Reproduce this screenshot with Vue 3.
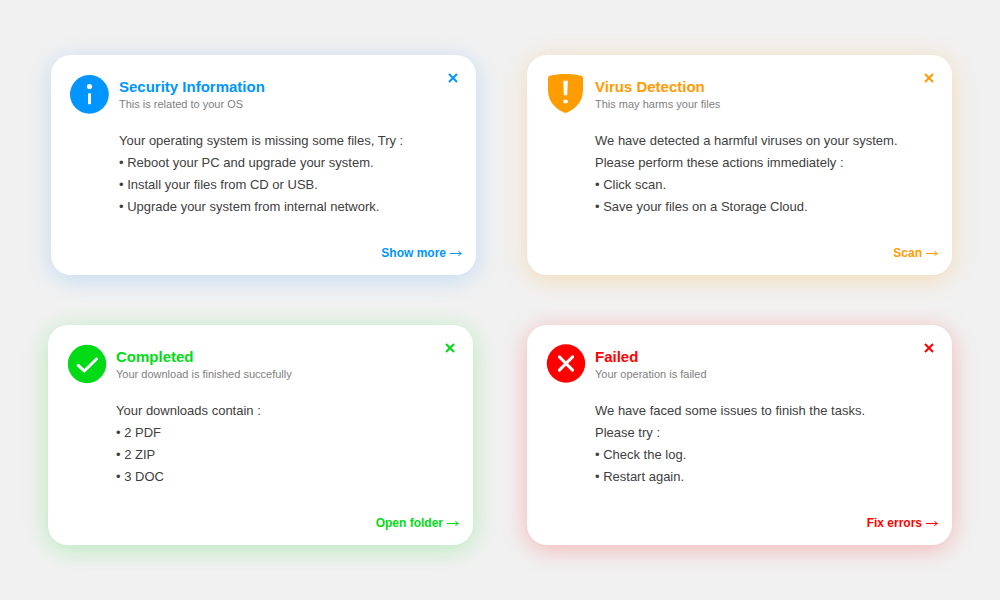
<script setup>
import { ref, computed } from 'vue'

const cards = ref([
  {
    id: 'info',
    title: 'Security Information',
    subtitle: 'This is related to your OS',
    lines: ['Your operating system is missing some files, Try :'],
    items: [
      'Reboot your PC and upgrade your system.',
      'Install your files from CD or USB.',
      'Upgrade your system from internal network.',
    ],
    action: 'Show more',
  },
  {
    id: 'warning',
    title: 'Virus Detection',
    subtitle: 'This may harms your files',
    lines: [
      'We have detected a harmful viruses on your system.',
      'Please perform these actions immediately :',
    ],
    items: ['Click scan.', 'Save your files on a Storage Cloud.'],
    action: 'Scan',
  },
  {
    id: 'success',
    title: 'Completed',
    subtitle: 'Your download is finished succefully',
    lines: ['Your downloads contain :'],
    items: ['2 PDF', '2 ZIP', '3 DOC'],
    action: 'Open folder',
  },
  {
    id: 'error',
    title: 'Failed',
    subtitle: 'Your operation is failed',
    lines: ['We have faced some issues to finish the tasks.', 'Please try :'],
    items: ['Check the log.', 'Restart again.'],
    action: 'Fix errors',
  },
])

const rows = computed(() => [
  { id: 'top', cards: cards.value.slice(0, 2) },
  { id: 'bottom', cards: cards.value.slice(2) },
])
</script>

<template>
  <main class="page">
    <div v-for="row in rows" :key="row.id" class="row" :class="row.id">
      <article v-for="card in row.cards" :key="card.id" class="card" :class="card.id">
        <header class="head">
          <svg class="icon" viewBox="0 0 40 40" aria-hidden="true">
            <template v-if="card.id === 'info'">
              <circle cx="19.4" cy="20.4" r="19.4" fill="currentColor" />
              <circle cx="19.5" cy="12.6" r="2.6" fill="#fff" />
              <rect x="18" y="19.4" width="3" height="10.8" fill="#fff" />
            </template>
            <template v-else-if="card.id === 'warning'">
              <path
                d="M3.800 1.800C13 -0.600 26.200 -0.600 35.400 1.800Q37 2.300 37 4V16C37 26.500 30.500 34.500 21.200 38.400Q19.500 39.200 17.800 38.400C8.500 34.500 2 26.500 2 16V4Q2 2.300 3.800 1.800Z"
                fill="currentColor"
              />
              <path d="M17.200 6.800H21.900L21.200 21.300H17.900Z" fill="#fff" />
              <ellipse cx="19.500" cy="27.500" rx="2.400" ry="1.900" fill="#fff" />
            </template>
            <template v-else-if="card.id === 'success'">
              <circle cx="20" cy="20" r="19.200" fill="currentColor" />
              <path d="M11.200 21.300L17.300 27L29.500 15" class="stroke" />
            </template>
            <template v-else>
              <circle cx="20" cy="19.500" r="19.200" fill="currentColor" />
              <path d="M13.400 12.900L26.600 26.100M26.600 12.900L13.400 26.100" class="stroke" />
            </template>
          </svg>
          <div class="titles">
            <h2>{{ card.title }}</h2>
            <p>{{ card.subtitle }}</p>
          </div>
          <button type="button" class="close" :aria-label="`Close ${card.title}`">
            <svg viewBox="0 0 10 10" aria-hidden="true">
              <path d="M1 1L9 9M9 1L1 9" />
            </svg>
          </button>
        </header>
        <div class="body">
          <p v-for="line in card.lines" :key="line">{{ line }}</p>
          <ul>
            <li v-for="item in card.items" :key="item">• {{ item }}</li>
          </ul>
        </div>
        <a href="#" class="action">
          {{ card.action }}
          <svg viewBox="0 0 12 7" aria-hidden="true">
            <path d="M0 3.500H11" />
            <path d="M8.500 1Q9.500 3 11.500 3.500Q9.500 4 8.500 6" />
          </svg>
        </a>
      </article>
    </div>
  </main>
</template>

<style>
body {
  background: #f1f1f1;
}
</style>

<style scoped>
.page {
  box-sizing: border-box;
  min-height: 100vh;
  padding: 55px 48px;
  display: flex;
  flex-direction: column;
  gap: 50px;
  background: #f1f1f1;
  font-family: "Liberation Sans", Arial, sans-serif;
}

.row {
  display: flex;
  gap: 54px;
}

.row.top {
  padding-left: 3px;
  gap: 51px;
}

.card {
  flex: 1 1 0;
  min-width: 0;
  min-height: 220px;
  box-sizing: border-box;
  padding: 19px 14px 13px 19px;
  display: flex;
  flex-direction: column;
  background: #fff;
  border-radius: 20px;
  color: var(--tone);
  box-shadow: 0 4px 24px var(--glow);
}

.info {
  --tone: #0095ff;
  --glow: rgba(0, 128, 255, 0.2);
}

.warning {
  --tone: #ff9c00;
  --glow: rgba(255, 156, 0, 0.25);
}

.success {
  --tone: #00db16;
  --glow: rgba(0, 219, 22, 0.25);
}

.error {
  --tone: #ff0000;
  --glow: rgba(255, 0, 0, 0.25);
}

.head {
  display: flex;
  align-items: flex-start;
}

.icon {
  flex: none;
  width: 40px;
  height: 40px;
}

.stroke {
  fill: none;
  stroke: #fff;
  stroke-width: 3;
  stroke-linecap: round;
  stroke-linejoin: miter;
}

.titles {
  flex: 1;
  min-width: 0;
  margin: 4px 0 0 9px;
}

h2,
p,
ul {
  margin: 0;
  padding: 0;
}

h2 {
  font-size: 15px;
  line-height: 18px;
}

.titles p {
  color: #808080;
  font-size: 11px;
  line-height: 16px;
}

.close {
  width: 18px;
  height: 18px;
  margin-top: -5px;
  padding: 4px;
  border: 0;
  background: none;
  color: inherit;
  cursor: pointer;
}

.close svg {
  display: block;
  width: 10px;
  height: 10px;
}

.close path {
  fill: none;
  stroke: currentColor;
  stroke-width: 2;
}

.body {
  margin: 16px 0 0 49px;
  color: #404040;
  font-size: 13px;
  line-height: 22px;
}

ul {
  list-style: none;
}

.action {
  align-self: flex-end;
  margin-top: auto;
  display: flex;
  align-items: center;
  gap: 4px;
  color: inherit;
  font-size: 12px;
  font-weight: 700;
  line-height: 18px;
  text-decoration: none;
}

.action svg {
  width: 12px;
  height: 7px;
}

.action path {
  fill: none;
  stroke: currentColor;
  stroke-width: 1;
}
</style>
